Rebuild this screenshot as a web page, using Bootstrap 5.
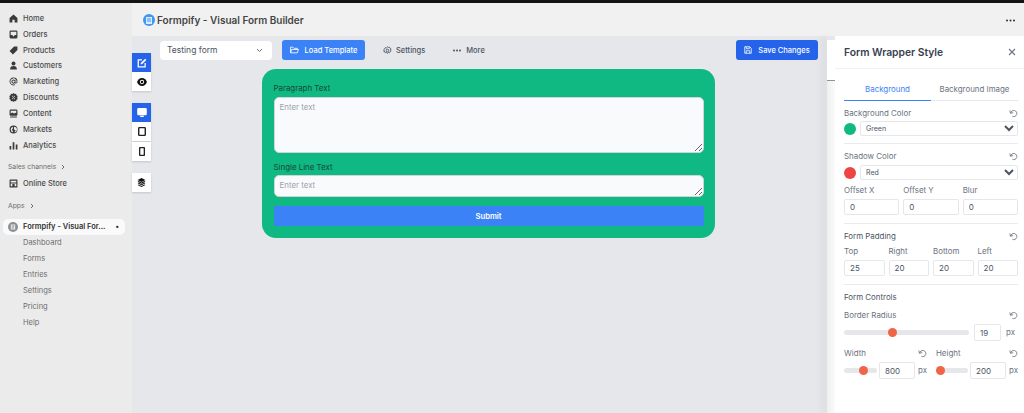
<!DOCTYPE html>
<html lang="en">
<head>
    <meta charset="UTF-8">
    <meta name="viewport" content="width=device-width, initial-scale=1.0">
    <title>Formpify - Visual Form Builder</title>
    <link href="https://cdn.jsdelivr.net/npm/bootstrap@5.3.3/dist/css/bootstrap.min.css" rel="stylesheet">
    <style>
        html, body { height: 100%; overflow: hidden; }
        body { font-family: Inter, "Liberation Sans", sans-serif; background: #e5e7eb; color: #303030; font-size: 7.9px; line-height: 1.2; }
        .topstrip { height: 3px; background: #141414; }
        .app-wrap { height: 410px; }

        /* admin sidebar */
        .side { width: 132px; flex: none; background: #ebebeb; padding-top: 7.5px; font-size: 7.5px; }
        .side-row { height: 15.85px; padding-left: 9px; color: #4a4a4a; font-weight: 500; white-space: nowrap; }
        .side-row svg { width: 9px; height: 9px; flex: none; margin-right: 5px; fill: #3a3a3a; }
        .side-head { color: #6d6d6d; padding-left: 8px; font-size: 6.8px; height: 16px; }
        .side-head-a { margin-top: 6px; }
        .side-head-b { margin-top: 7px; }
        .side-app { margin: 5px 7px 0 3px; height: 16px; background: #fafafa; border-radius: 5px; padding-left: 5px; padding-right: 6px; color: #303030; font-weight: 600; white-space: nowrap; }
        .side-app svg { width: 10px; height: 10px; margin-right: 5px; flex: none; }
        .app-more { font-size: 7px; }
        .side-sub { height: 15.85px; padding-left: 23px; color: #6d6d6d; font-weight: 400; }

        /* header */
        .app-head { height: 33px; background: #f1f1f1; padding: 1px 9px 0 11px; flex: none; }
        .app-title { font-size: 10px; font-weight: 600; color: #454545; margin-left: 2px; }
        .logo-dot { width: 12px; height: 12px; border-radius: 50%; background: #3f97ef; }

        /* toolbar + canvas */
        .stage { width: 695px; flex: none; }
        .gutter { width: 8px; flex: none; padding-top: 4px; box-shadow: -5px 0 10px rgba(0,0,0,.05); }
        .gutter-top { height: 41px; background: #fff; border-bottom: 1px solid #8f9399; }
        .gutter-low { height: 332px; background: linear-gradient(90deg, #efefef, #fbfbfb); }
        .tool-row { height: 25px; padding: 4px 0 0 28px; }
        .form-pick { width: 112px; height: 19px; margin-top: 1px; background: #fff; border-radius: 4px; padding: 0 9px 0 7px; color: #4b5563; font-size: 8.5px; }
        .btn-tool { height: 20px; padding: 0; border-radius: 3px; font-size: 7.5px; font-weight: 500; color: #fff; border: 0; white-space: nowrap; }
        .btn-load { width: 83px; margin-left: 10px; background: #3b82f6; gap: 6px; }
        .btn-save { width: 82px; background: #2563eb; margin-left: auto; margin-right: 9px; gap: 6px; }
        .btn-plain { color: #4b5563; background: transparent; gap: 4px; }
        .btn-settings { margin-left: 18px; }
        .btn-more { margin-left: 28px; gap: 5px; }
        .tool-row svg { flex: none; }

        .tool-col { width: 19px; flex: none; margin-top: -8px; }
        .tool-btn { width: 19px; height: 19px; background: #fff; box-shadow: 0 1px 2px rgba(0,0,0,.15); }
        .tool-btn.on { background: #2563eb; }
        .tool-gap { margin-top: 12px; }
        .tool-gap-s { margin-top: 1px; }
        .tool-gap-m { margin-top: 12px; }
        .canvas { padding-top: 8px; padding-left: 111px; }

        .form-box { width: 453px; height: 169px; background: #10b981; border-radius: 14px; padding: 13px 11.5px 12px; }
        .form-label-x { color: #17473a; font-size: 7.9px; margin: 0 0 3px; display: block; line-height: 12px; }
        .form-box textarea { display: block; width: 100%; background: #f9fafb; border: 1px solid #d1d5db; border-radius: 5px; padding: 4px 5px; font: 7.9px/1.3 Inter, "Liberation Sans", sans-serif; outline: 0; }
        .form-box textarea::placeholder { color: #9ca3af; opacity: 1; }
        .area-big { height: 56px; margin-bottom: 8px; }
        .area-small { height: 22px; margin-bottom: 9px; }
        .label-tight { margin-bottom: 2px; }
        .btn-send { display: block; width: 100%; height: 20px; background: #3b82f6; color: #fff; border: 0; font-size: 7.7px; font-weight: 600; padding: 1px 0 0; }

        /* style panel */
        .panel { width: 189px; flex: none; background: #fff; }
        .panel-head { height: 33px; border-bottom: 1px solid #f0f0f0; padding: 0 8px 0 9px; }
        .panel-title { font-size: 10.300px; font-weight: 600; color: #374151; }
        .panel-body { padding: 0 6px 0 9px; }
        .tab-row { height: 32px; }
        .tab-x { width: 87px; height: 32px; border-bottom: 1px solid #e5e7eb; color: #6b7280; font-size: 7.9px; padding-top: 16px; text-align: center; }
        .tab-x.on { color: #3b82f6; border-bottom-color: #3b82f6; }
        .sec-label { color: #6b7280; font-size: 7.9px; line-height: 11px; }
        .sec-dark { color: #4b5563; }
        .sec-top { margin-top: 7px; }
        .pick-row { margin-top: 2px; }
        .pick-row-b { margin-top: 3px; }
        .swatch { width: 12px; height: 12px; border-radius: 50%; flex: none; margin-right: 4px; }
        .swatch-green { background: #10b981; }
        .swatch-red { background: #ef4444; }
        .panel select { flex: 1; min-width: 0; height: 15px; border: 1px solid #e5e7eb; border-radius: 2px; background: #fff; color: #4b5563; font: 7px Inter, "Liberation Sans", sans-serif; padding: 0 0 0 1px; }
        .rule { height: 1px; background: #e9eaec; margin-top: 7px; }
        .rule-b { margin-top: 8px; }
        .cell-row-a { margin-top: 5px; }
        .cell-row-b { margin-top: 4px; }
        .cell-label { margin-bottom: 3px; }
        .num-box { display: block; width: 100%; height: 16px; border: 1px solid #e5e7eb; border-radius: 2px; padding: 0 5px; font: 8px Inter, "Liberation Sans", sans-serif; color: #4b5563; background: #fff; outline: 0; }
        .num-s { width: 27px; height: 17px; margin-left: 5px; }
        .num-m { width: 36px; height: 17px; margin-left: 2px; }
        .reset-ico { width: 9px; height: 9px; flex: none; }
        .px-tag { color: #6b7280; font-size: 7.9px; flex: none; margin-left: 3px; width: 9px; }
        .px-r { margin-left: 5px; width: 12px; }
        .px-w { width: 18px; }
        .slide-row { margin-top: 3px; }
        .half-w { width: 92px; }
        .half-w .reset-top { padding-right: 9px; }
        .slide { flex: 1; min-width: 0; height: 5px; border-radius: 3px; background: #e5e7eb; position: relative; }
        .slide i { position: absolute; top: -2px; width: 9px; height: 9px; border-radius: 50%; background: #ef6548; }
    </style>
</head>
<body>
    <div class="topstrip"></div>
    <div class="app-wrap d-flex">
        <!-- admin nav -->
        <nav class="side d-flex flex-column">
            <div class="side-row d-flex align-items-center"><svg viewBox="0 0 16 16"><path d="M8 1 1 7v8h5v-5h4v5h5V7z"/></svg>Home</div>
            <div class="side-row d-flex align-items-center"><svg viewBox="0 0 16 16"><path d="M3 1h10a2 2 0 0 1 2 2v10a2 2 0 0 1-2 2H3a2 2 0 0 1-2-2V3a2 2 0 0 1 2-2zm0 2v6h3l1 2h2l1-2h3V3z"/></svg>Orders</div>
            <div class="side-row d-flex align-items-center"><svg viewBox="0 0 16 16"><path d="M9 1h6v6l-8 8-6-6z"/></svg>Products</div>
            <div class="side-row d-flex align-items-center"><svg viewBox="0 0 16 16"><circle cx="8" cy="4.500" r="3.500"/><path d="M2 15c0-4 2-6 6-6s6 2 6 6z"/></svg>Customers</div>
            <div class="side-row d-flex align-items-center"><svg viewBox="0 0 16 16"><path fill-rule="evenodd" d="M8 1a7 7 0 1 0 3 13.300l-.6-1.400A5.500 5.500 0 1 1 13.500 8v1a1 1 0 0 1-2 0V5h-1.300v.5A3.500 3.500 0 1 0 10.600 10.500 2.500 2.500 0 0 0 15 9V8a7 7 0 0 0-7-7zm0 5a2 2 0 1 1 0 4 2 2 0 0 1 0-4z"/></svg>Marketing</div>
            <div class="side-row d-flex align-items-center"><svg viewBox="0 0 16 16"><path fill-rule="evenodd" d="M8 0l2 1.800 2.600-.4.600 2.500 2.300 1.400-1 2.700 1 2.700-2.300 1.300-.6 2.600-2.600-.4L8 16l-2-1.800-2.600.4-.6-2.600-2.300-1.300 1-2.700-1-2.700 2.300-1.400.6-2.500 2.600.4zM5.500 5v1.500H7V5zm3.500 4.500V11h1.500V9.500zM10 5 5 10.500l1 .5 5-5.500z"/></svg>Discounts</div>
            <div class="side-row d-flex align-items-center"><svg viewBox="0 0 16 16"><path fill-rule="evenodd" d="M3 1h10a2 2 0 0 1 2 2v7a2 2 0 0 1-2 2H3a2 2 0 0 1-2-2V3a2 2 0 0 1 2-2zm0 2v5l3-2 3 2 4-2V3zM2 13.500h12V15H2z"/></svg>Content</div>
            <div class="side-row d-flex align-items-center"><svg viewBox="0 0 16 16"><path fill-rule="evenodd" d="M8 1a7 7 0 1 0 7 7 7 7 0 0 0-7-7zM3 8a5 5 0 0 1 4-4.900V6L5 8l2 3v2a5 5 0 0 1-4-5zm6 5 3-3-3-2V3a5 5 0 0 1 0 10z"/></svg>Markets</div>
            <div class="side-row d-flex align-items-center"><svg viewBox="0 0 16 16"><path d="M1 9h3v6H1zM6.500 2h3v13h-3zM12 6h3v9h-3z"/></svg>Analytics</div>
            <div class="side-head side-head-a d-flex align-items-center">Sales channels
                <svg class="ms-1" width="6" height="6" viewBox="0 0 6 6" fill="none" stroke="#6d6d6d"><path d="m2 1 2 2-2 2"/></svg></div>
            <div class="side-row d-flex align-items-center"><svg viewBox="0 0 16 16"><path fill-rule="evenodd" d="M2 1h12a1 1 0 0 1 1 1v12a1 1 0 0 1-1 1H2a1 1 0 0 1-1-1V2a1 1 0 0 1 1-1zm1 2v3h10V3zm0 5v5h3V9h4v4h3V8z"/></svg>Online Store</div>
            <div class="side-head side-head-b d-flex align-items-center">Apps
                <svg class="ms-1" width="6" height="6" viewBox="0 0 6 6" fill="none" stroke="#6d6d6d"><path d="m2 1 2 2-2 2"/></svg></div>
            <div class="side-app d-flex align-items-center"><svg viewBox="0 0 16 16"><circle cx="8" cy="8" r="8" fill="#8a8f94"/><path d="M4.500 4h7v8h-7z" fill="#eee"/><path d="M6 6h4M6 8h4M6 10h3" stroke="#777"/></svg><span>Formpify - Visual For...</span>
                <span class="app-more ms-auto">•</span></div>
            <div class="side-sub d-flex align-items-center">Dashboard</div>
            <div class="side-sub d-flex align-items-center">Forms</div>
            <div class="side-sub d-flex align-items-center">Entries</div>
            <div class="side-sub d-flex align-items-center">Settings</div>
            <div class="side-sub d-flex align-items-center">Pricing</div>
            <div class="side-sub d-flex align-items-center">Help</div>
        </nav>

        <div class="flex-grow-1 d-flex flex-column">
            <header class="app-head d-flex align-items-center">
                <span class="logo-dot d-flex align-items-center justify-content-center"><svg width="6" height="7" viewBox="0 0 6 7"><path d="M0 0h6v7H0z" fill="#d8ecff"/><path d="M1 2h4M1 4h4" stroke="#3f97ef"/></svg></span>
                <span class="app-title">Formpify - Visual Form Builder</span>
                <svg class="ms-auto" width="9" height="3" viewBox="0 0 9 3" fill="#303030"><circle cx="1" cy="1.500" r="1"/><circle cx="4.500" cy="1.500" r="1"/><circle cx="8" cy="1.500" r="1"/></svg>
            </header>

            <div class="d-flex flex-grow-1">
                <div class="stage">
                    <div class="tool-row d-flex align-items-start">
                        <div class="form-pick d-flex align-items-center justify-content-between">Testing form
                            <svg width="7" height="5" viewBox="0 0 7 5" fill="none" stroke="#6b7280"><path d="m1 1 2.500 2.500L6 1"/></svg></div>
                        <button class="btn-tool btn-load d-flex align-items-center justify-content-center">
                            <svg width="9" height="8" viewBox="0 0 16 14" fill="none" stroke="#fff" stroke-width="1.500"><path d="M1 12V2h4l2 2h6v2M1 12l2-6h12l-2 6z"/></svg>Load Template</button>
                        <button class="btn-tool btn-plain btn-settings d-flex align-items-center">
                            <svg width="9" height="9" viewBox="0 0 16 16" fill="none" stroke="#4b5563" stroke-width="1.600"><circle cx="8" cy="8" r="2.300"/><path d="M8 1.500l1.500 1 2-.3 1 1.700 1.500 1.200-.5 2 .5 2-1.500 1.200-1 1.700-2-.3-1.500 1-1.500-1-2 .3-1-1.700L1.500 10l.5-2-.5-2 1.500-1.200 1-1.700 2 .3z"/></svg>
                            <span>Settings</span></button>
                        <button class="btn-tool btn-plain btn-more d-flex align-items-center">
                            <svg width="8" height="3" viewBox="0 0 8 3" fill="#4b5563"><circle cx="1" cy="1.500" r="1"/><circle cx="4" cy="1.500" r="1"/><circle cx="7" cy="1.500" r="1"/></svg>
                            <span>More</span></button>
                        <button class="btn-tool btn-save d-flex align-items-center justify-content-center">
                            <svg width="8" height="8" viewBox="0 0 16 16" fill="none" stroke="#fff" stroke-width="1.600"><path d="M1.500 1.500h10l3 3v10h-13zM4.500 1.500v4h6v-4M4.500 14.500V9.500h7v5"/></svg>Save Changes</button>
                    </div>
                    <div class="d-flex">
                        <div class="tool-col d-flex flex-column">
                            <div class="tool-btn on d-flex align-items-center justify-content-center"><svg width="10" height="10" viewBox="0 0 16 16" fill="none" stroke="#fff" stroke-width="2"><path d="M8 3H2v11h11V8"/><path d="M6 10V8l7-7 2 2-7 7z" fill="#fff" stroke="none"/></svg></div>
                            <div class="tool-btn d-flex align-items-center justify-content-center"><svg width="10" height="8" viewBox="0 0 16 13"><path d="M8 0c4 0 7 3.500 8 6.500C15 9.500 12 13 8 13s-7-3.500-8-6.500C1 3.500 4 0 8 0z" fill="#111"/><circle cx="8" cy="6.500" r="3.500" fill="#fff"/><circle cx="8" cy="6.500" r="2" fill="#111"/></svg></div>
                            <div class="tool-btn tool-gap on d-flex align-items-center justify-content-center"><svg width="10" height="9" viewBox="0 0 16 15" fill="#fff"><path d="M2 0h12a2 2 0 0 1 2 2v8a2 2 0 0 1-2 2H2a2 2 0 0 1-2-2V2a2 2 0 0 1 2-2zM5 13h6v2H5z"/></svg></div>
                            <div class="tool-btn d-flex align-items-center justify-content-center"><svg width="8" height="9" viewBox="0 0 13 15" fill="none" stroke="#222" stroke-width="2.400"><rect x="1" y="1" width="11" height="13" rx="1.500"/></svg></div>
                            <div class="tool-btn tool-gap-s d-flex align-items-center justify-content-center"><svg width="6" height="9" viewBox="0 0 10 15" fill="none" stroke="#222" stroke-width="2.400"><rect x="1" y="1" width="8" height="13" rx="1.500"/></svg></div>
                            <div class="tool-btn tool-gap-m d-flex align-items-center justify-content-center"><svg width="9" height="9" viewBox="0 0 16 16" fill="#111"><path d="M8 0l7 3.500L8 7 1 3.500zM1 6.500 3 5.500 8 8l5-2.500 2 1L8 10zM1 9.500 3 8.500 8 11l5-2.500 2 1L8 13z"/><path d="M1 12.500 3 11.500 8 14l5-2.500 2 1L8 16z"/></svg></div>
                        </div>
                        <div class="canvas">
                            <form class="form-box">
                                <label class="form-label-x">Paragraph Text</label>
                                <textarea class="area-big" placeholder="Enter text"></textarea>
                                <label class="form-label-x label-tight">Single Line Text</label>
                                <textarea class="area-small" placeholder="Enter text"></textarea>
                                <button type="button" class="btn-send">Submit</button>
                            </form>
                        </div>
                    </div>
                </div>
                <div class="gutter">
                    <div class="gutter-top"></div>
                    <div class="gutter-low"></div>
                </div>

                <!-- style panel -->
                <aside class="panel">
                    <div class="panel-head d-flex align-items-center justify-content-between">
                        <span class="panel-title">Form Wrapper Style</span>
                        <svg width="8" height="8" viewBox="0 0 8 8" stroke="#6b7280" stroke-width="1.100"><path d="M1 1l6 6M7 1 1 7"/></svg>
                    </div>
                    <div class="panel-body">
                        <div class="tab-row d-flex">
                            <div class="tab-x on">Background</div>
                            <div class="tab-x">Background Image</div>
                        </div>

                        <div class="d-flex justify-content-between align-items-center sec-top"><span class="sec-label">Background Color</span>
                            <svg class="reset-ico" viewBox="0 0 16 16" fill="none" stroke="#6b7280" stroke-width="1.500"><path d="M3 7.500A5.500 5.500 0 1 1 6 13M1.500 2.500l1 5 5-1"/></svg></div>
                        <div class="d-flex align-items-center pick-row"><span class="swatch swatch-green"></span>
                            <select><option>Green</option></select></div>
                        <div class="rule"></div>

                        <div class="d-flex justify-content-between align-items-center sec-top"><span class="sec-label">Shadow Color</span>
                            <svg class="reset-ico" viewBox="0 0 16 16" fill="none" stroke="#6b7280" stroke-width="1.500"><path d="M3 7.500A5.500 5.500 0 1 1 6 13M1.500 2.500l1 5 5-1"/></svg></div>
                        <div class="d-flex align-items-center pick-row-b"><span class="swatch swatch-red"></span>
                            <select><option>Red</option></select></div>
                        <div class="d-flex gap-1 cell-row-a">
                            <div class="flex-fill"><div class="sec-label cell-label">Offset X</div><input class="num-box" value="0"></div>
                            <div class="flex-fill"><div class="sec-label cell-label">Offset Y</div><input class="num-box" value="0"></div>
                            <div class="flex-fill"><div class="sec-label cell-label">Blur</div><input class="num-box" value="0"></div>
                        </div>
                        <div class="rule rule-b"></div>

                        <div class="d-flex justify-content-between align-items-center sec-top"><span class="sec-label sec-dark">Form Padding</span>
                            <svg class="reset-ico" viewBox="0 0 16 16" fill="none" stroke="#6b7280" stroke-width="1.500"><path d="M3 7.500A5.500 5.500 0 1 1 6 13M1.500 2.500l1 5 5-1"/></svg></div>
                        <div class="d-flex gap-1 cell-row-b">
                            <div class="flex-fill"><div class="sec-label cell-label">Top</div><input class="num-box" value="25"></div>
                            <div class="flex-fill"><div class="sec-label cell-label">Right</div><input class="num-box" value="20"></div>
                            <div class="flex-fill"><div class="sec-label cell-label">Bottom</div><input class="num-box" value="20"></div>
                            <div class="flex-fill"><div class="sec-label cell-label">Left</div><input class="num-box" value="20"></div>
                        </div>
                        <div class="rule rule-b"></div>

                        <div class="sec-label sec-dark sec-top">Form Controls</div>
                        <div class="d-flex justify-content-between align-items-center sec-top"><span class="sec-label">Border Radius</span>
                            <svg class="reset-ico" viewBox="0 0 16 16" fill="none" stroke="#6b7280" stroke-width="1.500"><path d="M3 7.500A5.500 5.500 0 1 1 6 13M1.500 2.500l1 5 5-1"/></svg></div>
                        <div class="d-flex align-items-center slide-row">
                            <div class="slide"><i style="left:44px"></i></div>
                            <input class="num-box num-s" value="19">
                            <span class="px-tag px-r">px</span>
                        </div>
                        <div class="d-flex sec-top">
                            <div class="half-w">
                                <div class="reset-top d-flex justify-content-between align-items-center"><span class="sec-label">Width</span>
                                    <svg class="reset-ico" viewBox="0 0 16 16" fill="none" stroke="#6b7280" stroke-width="1.500"><path d="M3 7.500A5.500 5.500 0 1 1 6 13M1.500 2.500l1 5 5-1"/></svg></div>
                                <div class="d-flex align-items-center slide-row">
                                    <div class="slide"><i style="left:15px"></i></div>
                                    <input class="num-box num-m" value="800">
                                    <span class="px-tag px-w">px</span>
                                </div>
                            </div>
                            <div class="flex-fill">
                                <div class="d-flex justify-content-between align-items-center"><span class="sec-label">Height</span>
                                    <svg class="reset-ico" viewBox="0 0 16 16" fill="none" stroke="#6b7280" stroke-width="1.500"><path d="M3 7.500A5.500 5.500 0 1 1 6 13M1.500 2.500l1 5 5-1"/></svg></div>
                                <div class="d-flex align-items-center slide-row">
                                    <div class="slide"><i style="left:0"></i></div>
                                    <input class="num-box num-m" value="200">
                                    <span class="px-tag">px</span>
                                </div>
                            </div>
                        </div>
                    </div>
                </aside>
            </div>
        </div>
    </div>
    <script src="https://cdn.jsdelivr.net/npm/bootstrap@5.3.3/dist/js/bootstrap.bundle.min.js"></script>
</body>
</html>
